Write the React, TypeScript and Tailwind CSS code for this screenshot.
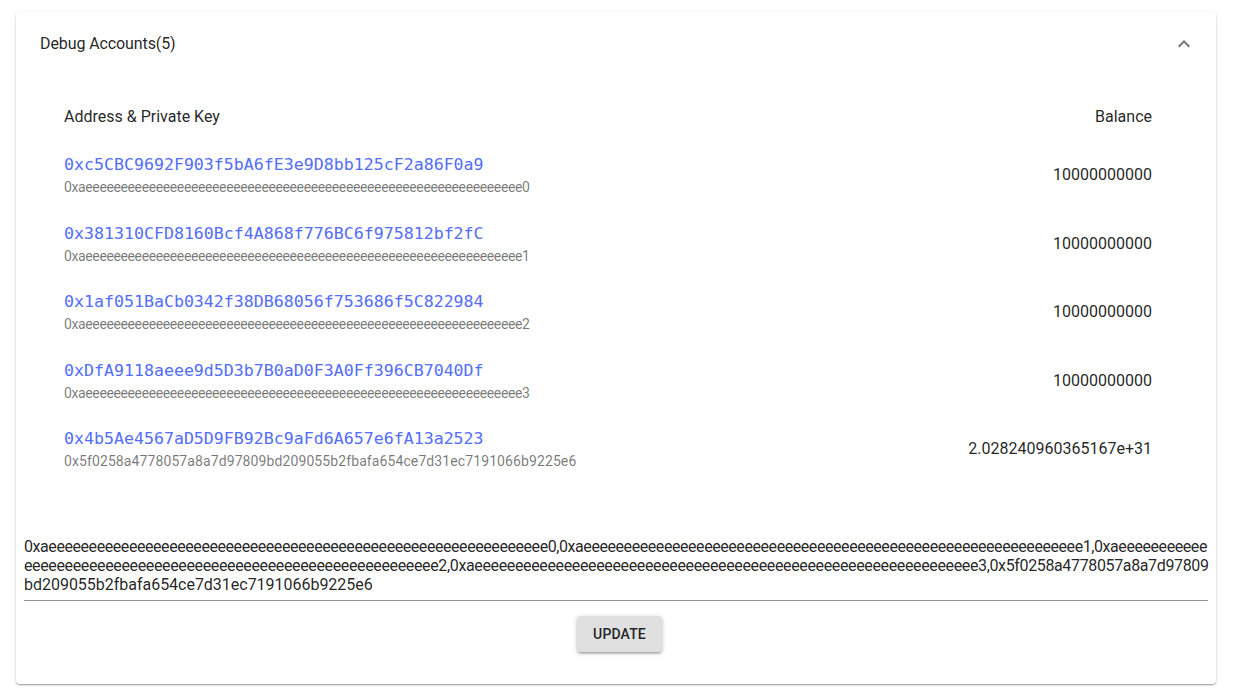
interface Account {
  address: string;
  key: string;
  balance: string;
}

const e62 = 'e'.repeat(62);

const accounts: Account[] = [
  { address: '0xc5CBC9692F903f5bA6fE3e9D8bb125cF2a86F0a9', key: `0xa${e62}0`, balance: '10000000000' },
  { address: '0x381310CFD8160Bcf4A868f776BC6f975812bf2fC', key: `0xa${e62}1`, balance: '10000000000' },
  { address: '0x1af051BaCb0342f38DB68056f753686f5C822984', key: `0xa${e62}2`, balance: '10000000000' },
  { address: '0xDfA9118aeee9d5D3b7B0aD0F3A0Ff396CB7040Df', key: `0xa${e62}3`, balance: '10000000000' },
  {
    address: '0x4b5Ae4567aD5D9FB92Bc9aFd6A657e6fA13a2523',
    key: '0x5f0258a4778057a8a7d97809bd209055b2fbafa654ce7d31ec7191066b9225e6',
    balance: '2.028240960365167e+31',
  },
];

// textarea value, wrapped the way the field shows it
const keyLines = [
  `${accounts[0].key},${accounts[1].key},0xa${'e'.repeat(11)}`,
  `${'e'.repeat(51)}2,${accounts[3].key},0x5f0258a4778057a8a7d97809`,
  'bd209055b2fbafa654ce7d31ec7191066b9225e6',
];
const lineTracking = ['tracking-[-0.43px]', 'tracking-[-0.36px]', 'tracking-[-0.02px]'];

export default function App() {
  return (
    <div className="min-h-screen bg-white pt-3 px-4 font-['Roboto','Liberation_Sans',sans-serif] text-[rgba(0,0,0,0.87)]">
      <div className="w-[1200px] bg-white rounded shadow-[0_1px_3px_rgba(0,0,0,0.2),0_1px_1px_rgba(0,0,0,0.14),0_2px_1px_-1px_rgba(0,0,0,0.12)]">
        {/* Summary */}
        <div className="h-16 pl-6 pr-[20px] flex items-center justify-between">
          <span className="text-base tracking-[-0.1px]">Debug Accounts(5)</span>
          <svg viewBox="0 0 24 24" className="w-6 h-6 fill-[rgba(0,0,0,0.54)]">
            <path d="M12 8l-6 6 1.41 1.41L12 10.83l4.59 4.58L18 14z" />
          </svg>
        </div>

        {/* Accounts table */}
        <div className="px-6 pt-[13px]">
          <div className="h-[52px] pt-[5px] pb-[1px] flex items-center justify-between pl-6 pr-10 text-base">
            <span>Address &amp; Private Key</span>
            <span>Balance</span>
          </div>
          {accounts.map((acc) => (
            <div key={acc.address} className="h-[68.5px] flex items-center justify-between pl-6 pr-10">
              <div className="flex flex-col">
                <span className="text-[16.6px] leading-6 text-[#536dfe] font-['DejaVu_Sans_Mono',monospace]">
                  {acc.address}
                </span>
                <span
                  className={
                    'text-sm leading-5 text-[rgba(0,0,0,0.54)] ' +
                    (acc.key.includes('eeee') ? 'tracking-[-0.38px]' : 'tracking-[0.1px]')
                  }
                >
                  {acc.key}
                </span>
              </div>
              <span className="text-base">{acc.balance}</span>
            </div>
          ))}
        </div>

        {/* Keys textarea */}
        <div className="px-2 mt-[47px]">
          <div className="pt-[6px] pb-[6px] border-b border-[rgba(0,0,0,0.42)] text-base leading-[19px]">
            {keyLines.map((line, i) => (
              <div key={i} className={'whitespace-nowrap ' + lineTracking[i]}>
                {line}
              </div>
            ))}
          </div>
        </div>

        <div className="flex justify-center pt-[15px] pb-8 pl-[7px]">
          <button className="h-9 px-4 rounded bg-[#e0e0e0] text-sm font-medium tracking-[0.01em] uppercase shadow-[0_1px_5px_rgba(0,0,0,0.2),0_2px_2px_rgba(0,0,0,0.14),0_3px_1px_-2px_rgba(0,0,0,0.12)]">
            Update
          </button>
        </div>
      </div>
    </div>
  );
}
